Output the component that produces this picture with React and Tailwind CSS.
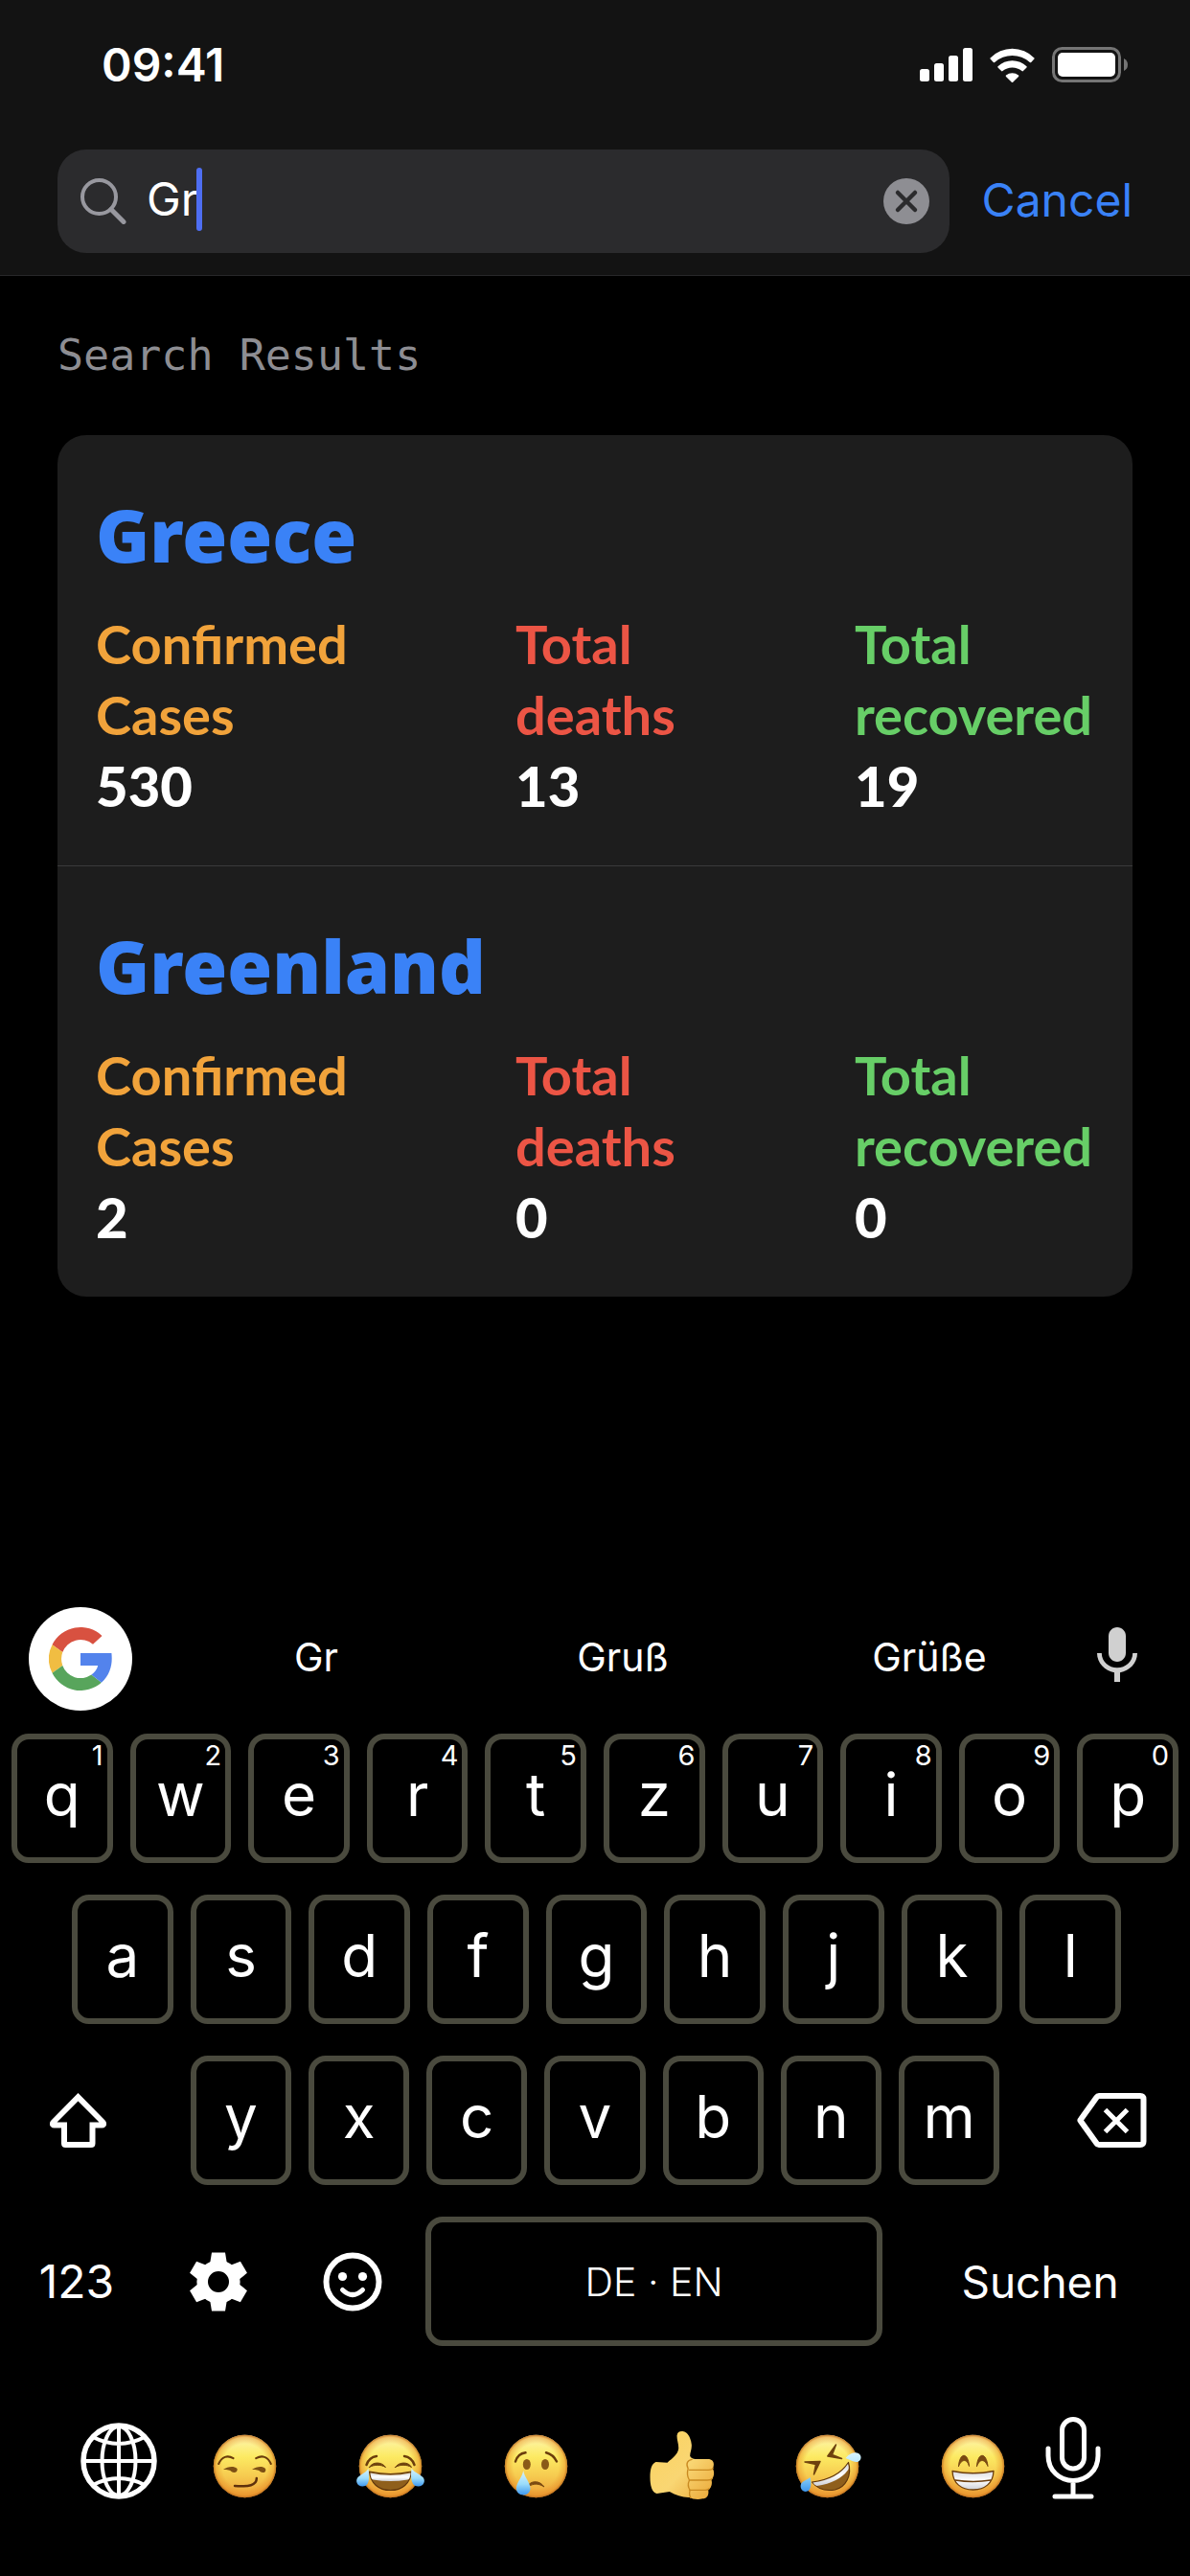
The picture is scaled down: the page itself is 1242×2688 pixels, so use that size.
import React from "react";

const results = [
  { name: "Greece", confirmed: 530, deaths: 13, recovered: 19 },
  { name: "Greenland", confirmed: 2, deaths: 0, recovered: 0 },
];

const topRow = ["q", "w", "e", "r", "t", "z", "u", "i", "o", "p"];
const homeRow = ["a", "s", "d", "f", "g", "h", "j", "k", "l"];
const bottomRow = ["y", "x", "c", "v", "b", "n", "m"];

/* ---------- status bar icons ---------- */

function SignalIcon() {
  return (
    <svg width="55" height="36" viewBox="0 0 55 36" fill="#fff" aria-hidden="true">
      <rect x="0" y="22" width="10" height="13" rx="2.5" />
      <rect x="15" y="16" width="10" height="19" rx="2.5" />
      <rect x="30" y="8" width="10" height="27" rx="2.5" />
      <rect x="45" y="0" width="10" height="35" rx="2.5" />
    </svg>
  );
}

function WifiIcon() {
  return (
    <svg width="47" height="36" viewBox="0 0 47 36" fill="#fff" aria-hidden="true">
      <path d="M0.6 10.4A32 32 0 0 1 46.4 10.4Q47 11 46.4 11.6L43.2 14.9Q42.5 15.5 41.8 14.9A27.5 27.5 0 0 0 5.2 14.9Q4.5 15.5 3.8 14.9L0.6 11.6Q0 11 0.6 10.4Z" />
      <path d="M8.5 19.3A21.5 21.5 0 0 1 38.5 19.3Q39 19.9 38.5 20.5L34.9 24.1Q34.2 24.7 33.5 24.1A15.5 15.5 0 0 0 13.5 24.1Q12.8 24.7 12.1 24.1L8.5 20.5Q8 19.9 8.5 19.3Z" />
      <path d="M17 28.6A10 10 0 0 1 30 28.6Q30.600 29.300 30 30L24.200 35.700Q23.500 36.300 22.800 35.700L17 30Q16.400 29.300 17 28.600Z" />
    </svg>
  );
}

function BatteryIcon() {
  return (
    <svg width="79" height="37" viewBox="0 0 79 37" aria-hidden="true">
      <rect x="1.500" y="1.500" width="69" height="34" rx="9" fill="none" stroke="#757575" strokeWidth="3" />
      <rect x="6" y="6" width="60" height="25" rx="5" fill="#fff" />
      <path d="M75 12Q79 14 79 18.500Q79 23 75 25Z" fill="#757575" />
    </svg>
  );
}

/* ---------- search bar icons ---------- */

function MagnifierIcon() {
  return (
    <svg width="48" height="48" viewBox="0 0 48 48" fill="none" stroke="#98989f" strokeLinecap="round" aria-hidden="true">
      <circle cx="19.500" cy="19.500" r="17.500" strokeWidth="4" />
      <path d="M32 32.500L45 45.500" strokeWidth="5" />
    </svg>
  );
}

function ClearIcon() {
  return (
    <svg width="48" height="48" viewBox="0 0 48 48" aria-hidden="true">
      <circle cx="24" cy="24" r="24" fill="#8e8e93" />
      <path d="M15 15L33 33M33 15L15 33" stroke="#2b2b2d" strokeWidth="4.500" strokeLinecap="round" />
    </svg>
  );
}

/* ---------- keyboard icons ---------- */

function GoogleIcon() {
  return (
    <svg width="66" height="66" viewBox="-33 -33 66 66" aria-hidden="true">
      <path fill="#d85140" d="M22.500-24.100A33 33 0 0 0-29.500-14.800L-18.700-6.900A20 20 0 0 1 13-15.200Z" />
      <path fill="#f1bd42" d="M-29.500-14.800A33 33 0 0 0-29.500 14.800L-18.700 6.900A20 20 0 0 1-18.700-6.900Z" />
      <path fill="#58a55c" d="M-29.500 14.800A33 33 0 0 0 21.900 24.700L11.400 16.600A20 20 0 0 1-18.700 6.900Z" />
      <path fill="#5383ec" d="M0-6H32.400C33.600 5 31.500 16 21.900 24.700L11.400 16.600C15 14 17.300 11 18.200 7H0Z" />
    </svg>
  );
}

function VoiceIcon() {
  return (
    <svg width="72" height="72" viewBox="0 0 24 24" fill="#d0d0d0" aria-hidden="true">
      <path d="M12 14c1.660 0 3-1.340 3-3V5c0-1.660-1.340-3-3-3S9 3.340 9 5v6c0 1.660 1.340 3 3 3z" />
      <path d="M17.400 11c0 3-2.540 5.100-5.400 5.100S6.600 14 6.600 11H5c0 3.410 2.720 6.230 6 6.720V21h2v-3.280c3.280-.48 6-3.300 6-6.720h-1.600z" />
    </svg>
  );
}

function ShiftIcon() {
  return (
    <svg width="59" height="57" viewBox="0 0 59 57" fill="#fff" fillRule="evenodd" aria-hidden="true">
      <path d="M29.500 0L57.500 28.500Q60.500 32 58 35Q56.800 36.500 54.500 36.500H47.500V52.500Q47.500 57 43 57H16.500Q12 57 12 52.500V36.500H4.500Q2.200 36.500 1 35Q-1.500 32 1.500 28.500ZM29.500 8.500L7.500 30.500H18V51H41.500V30.500H51.500Z" />
    </svg>
  );
}

function BackspaceIcon() {
  return (
    <svg width="73" height="57" viewBox="0 0 73 57" fill="none" stroke="#fff" aria-hidden="true">
      <path d="M23 3H66Q69.500 3 69.500 6.500V50.500Q69.500 54 66 54H23Q21.500 54 20.500 52.500L4 29.500Q3 28.500 4 27.500L20.500 4.500Q21.500 3 23 3Z" strokeWidth="6" />
      <path d="M29.500 17.500L52.500 40.500M52.500 17.500L29.500 40.500" strokeWidth="5" />
    </svg>
  );
}

function GearIcon() {
  return (
    <svg width="62" height="62" viewBox="-31 -31 62 62" aria-hidden="true">
      <circle r="16.800" fill="none" stroke="#fff" strokeWidth="11.600" />
      {[0, 60, 120, 180, 240, 300].map((angle) => (
        <path key={angle} transform={`rotate(${angle})`} fill="#fff" d="M-7-30.500H7L8.800-19.500L6-16H-6L-8.800-19.500Z" />
      ))}
    </svg>
  );
}

function SmileyIcon() {
  return (
    <svg width="62" height="62" viewBox="-31 -31 62 62" fill="none" stroke="#fff" aria-hidden="true">
      <circle r="27.500" strokeWidth="6" />
      <circle cx="-10.500" cy="-5.500" r="4.600" fill="#fff" stroke="none" />
      <circle cx="10.500" cy="-5.500" r="4.600" fill="#fff" stroke="none" />
      <path d="M-10.500 8.500Q0 18.500 10.500 8.500" strokeWidth="5" strokeLinecap="round" />
    </svg>
  );
}

function GlobeIcon() {
  return (
    <svg width="80" height="80" viewBox="-40 -40 80 80" fill="none" stroke="#fff" strokeWidth="4" aria-hidden="true">
      <circle r="37" strokeWidth="5.500" />
      <ellipse rx="17.500" ry="36" />
      <path d="M0-37V37M-37 0H37M-27-25Q0-11 27-25M-27 25Q0 11 27 25" />
    </svg>
  );
}

function DictationIcon() {
  return (
    <svg width="58" height="87" viewBox="0 0 58 87" fill="none" stroke="#fff" strokeWidth="5" strokeLinecap="round" aria-hidden="true">
      <rect x="17.500" y="3.500" width="23" height="51.500" rx="11.500" />
      <path d="M3 34V41.500C3 57 15 67.500 29 67.500S55 57 55 41.500V34M29 67.500V84M10 84H48" />
    </svg>
  );
}

/* ---------- emoji ---------- */

function EmojiDefs() {
  return (
    <svg width="0" height="0" className="absolute" aria-hidden="true">
      <defs>
        <linearGradient id="skin" x1="0" y1="0" x2="0" y2="1">
          <stop offset="0" stopColor="#fdf6b4" />
          <stop offset="0.350" stopColor="#fcea62" />
          <stop offset="0.650" stopColor="#f6cb50" />
          <stop offset="1" stopColor="#ee9f38" />
        </linearGradient>
        <radialGradient id="rim" cx="0.500" cy="0.500" r="0.500">
          <stop offset="0.720" stopColor="#e58a24" stopOpacity="0" />
          <stop offset="0.920" stopColor="#e58a24" stopOpacity="0.450" />
          <stop offset="1" stopColor="#b8681c" stopOpacity="0.900" />
        </radialGradient>
        <linearGradient id="drop" x1="0" y1="0" x2="0" y2="1">
          <stop offset="0" stopColor="#d8f3fd" />
          <stop offset="0.550" stopColor="#9bdcfb" />
          <stop offset="1" stopColor="#3e97ee" />
        </linearGradient>
        <linearGradient id="teeth" x1="0" y1="0" x2="0" y2="1">
          <stop offset="0" stopColor="#d9dade" />
          <stop offset="0.500" stopColor="#ffffff" />
          <stop offset="1" stopColor="#cfd0d6" />
        </linearGradient>
        <linearGradient id="hand" x1="0" y1="0" x2="1" y2="1">
          <stop offset="0" stopColor="#fbd25e" />
          <stop offset="0.550" stopColor="#f9d673" />
          <stop offset="1" stopColor="#eaa636" />
        </linearGradient>
      </defs>
    </svg>
  );
}

function Face({ children }) {
  return (
    <svg width="77" height="72" viewBox="-38.500 -37.500 77 72" fill="none" strokeLinecap="round" strokeLinejoin="round" aria-hidden="true">
      <circle r="32.700" fill="url(#skin)" />
      <circle r="32.700" fill="url(#rim)" />
      {children}
    </svg>
  );
}

function Smirk() {
  return (
    <Face>
      <path d="M-27.300-2.500C-24-10-18-12-12-8.300M11.700-8.300C18-12 24-10 27.300-2.500" stroke="#6b3d0c" strokeWidth="2" />
      <path d="M-22.500 3.500C-18 .5-12-1-8 2.500C-7 6-11 8-14 5.500C-15 4-18 3.500-22.500 3.500ZM7.500 3.500C12 .5 18-1 21.500 2.500C23 6 19 8 16 5.500C15 4 12 3.500 7.500 3.500Z" fill="#7d4f14" />
      <path d="M-10.500 20.500C4 21.500 12.500 20 12.300 12.500" stroke="#5e300c" strokeWidth="2.500" />
    </Face>
  );
}

function Joy() {
  return (
    <Face>
      <path d="M-25-1.500C-23-7-19-10-14.500-10.500M14.500-10.500C19-10 23-7 25-1.500" stroke="#6b3d0c" strokeWidth="2.500" />
      <path d="M-22 1C-19-5-9-5-5 1C-10-2-17-2-22 1ZM5 1C9-5 19-5 22 1C17-2 10-2 5 1Z" fill="#6e420e" stroke="#6e420e" strokeWidth="1" />
      <path d="M-22 5.500Q0 10.500 22 5.500C21 18 12 25 0 25S-21 18-22 5.500Z" fill="#8f5f1c" stroke="#5e350c" strokeWidth="1.200" />
      <path d="M-21 7Q0 11.500 21 7Q20.500 13.500 18 14Q0 17 -18 14Q-20.500 13.500-21 7Z" fill="url(#teeth)" />
      <path d="M-23 2.500C-22 10-21 21-29 21C-35 21-37 15-34 11.500C-31 8.500-26 7-23 2.500ZM22 2.500C21 10 21 21 29 21C35 21 37 15 34 11.500C31 8.500 26 7 22 2.500Z" fill="url(#drop)" />
    </Face>
  );
}

function Crying() {
  return (
    <Face>
      <path d="M-21.500-5C-20-10-16-13.500-11-14.200M10.500-14.200C15-13 19-10 21.500-5" stroke="#6b3d0c" strokeWidth="2.500" />
      <ellipse cx="-9.700" cy="-2" rx="4" ry="5.500" fill="#8a5a18" />
      <ellipse cx="9.500" cy="-2" rx="4" ry="5.500" fill="#8a5a18" />
      <path d="M-8 19.500C-4 14.500 4 15 8.500 21.500C3 18-2 17.500-8 21Z" fill="#7a4a12" stroke="#7a4a12" strokeWidth="1" />
      <path d="M-13.300 4.500C-12 12-6 17-6 23C-6 27-9 30-13.300 30S-20.600 27-20.600 23C-20.600 17-14.600 12-13.300 4.500Z" fill="url(#drop)" />
    </Face>
  );
}

function ThumbsUp() {
  return (
    <svg width="77" height="72" viewBox="40.500 45 231 216" fill="none" strokeLinecap="round" aria-hidden="true">
      <path
        fill="url(#hand)"
        d="M141 62C142 51 149 47 159 48C174 50 184 66 187 90C188 104 182 116 182 125C186 134 195 135 205 135H238C256 135 260 150 253 165C260 176 257 192 249 200C253 213 248 226 239 232C242 247 236 258 222 259C205 263 190 260 180 255C160 256 138 248 118 237L78 243C62 240 57 215 57 192C57 168 61 150 75 144L111 146C128 132 144 120 146 103C147 87 141 77 141 62Z"
      />
      <path
        d="M176 165C168 150 174 138 188 136M180 169H240Q252 169 254 163M180 201H236Q248 201 251 196M180 232H230Q238 232 241 228M176 165Q170 185 180 201Q172 218 182 232Q178 246 184 256"
        stroke="#c98a22"
        strokeWidth="4"
      />
    </svg>
  );
}

function Rofl() {
  return (
    <Face>
      <path d="M-23.500-4.500L-7.500-5L-14 8.500L-12-2ZM9-22.500L.3-10.500L15-8L5-12Z" fill="#6e420e" stroke="#6e420e" strokeWidth="1.500" />
      <path d="M-16 16.500Q11 13 22-4C26 10 19 22 8 24.500C-1 26-10 24-16 16.500Z" fill="#8f5f1c" stroke="#5e350c" strokeWidth="1.200" />
      <path d="M-15 17Q11 13.500 21.500-2.500Q23 1.500 21.500 4Q12 17-11 20.500Q-14 19-15 17Z" fill="url(#teeth)" />
      <path d="M19-8.500C24-14 29-15 32.500-13.500C36-11.500 36-6.500 32-4.800C28-3.500 24-7 19-8.500ZM-18 11.500C-16.500 17-16.500 25-21.500 26.300C-26 27-29 23-27.500 18.500C-25.500 15-21 14-18 11.500Z" fill="url(#drop)" />
    </Face>
  );
}

function Grin() {
  return (
    <Face>
      <path d="M-15 0C-14-15-5-15-4 0C-6-8-12-8-15 0ZM4 0C5-15 14-15 15.500 0C12-8 7-8 4 0Z" fill="#7a4a12" stroke="#7a4a12" strokeWidth="1" />
      <path d="M-21.500 5Q0 9.500 21.500 5C21 18 12 24.500 0 24.500S-21 18-21.500 5Z" fill="url(#teeth)" stroke="#6b3d0c" strokeWidth="1.300" />
      <path d="M-18.500 14.500Q0 17.500 18.500 14.500" stroke="#6b3d0c" strokeWidth="1.300" />
    </Face>
  );
}

const emojis = [
  { label: "Smirking face", Icon: Smirk },
  { label: "Face with tears of joy", Icon: Joy },
  { label: "Crying face", Icon: Crying },
  { label: "Thumbs up", Icon: ThumbsUp },
  { label: "Rolling on the floor laughing", Icon: Rofl },
  { label: "Beaming face", Icon: Grin },
];

/* ---------- page sections ---------- */

function Header() {
  return (
    <header className="border-b border-[#272729] bg-[#131313] pt-9 pb-[23px]">
      <div className="flex items-center justify-between pr-[65px] pl-[106px]">
        <time className="text-[48px] leading-[63px] font-semibold">09:41</time>
        <div className="flex items-center gap-[18px]">
          <SignalIcon />
          <WifiIcon />
          <BatteryIcon />
        </div>
      </div>
      <form className="mt-[57px] flex items-center px-[60px]" onSubmit={(e) => e.preventDefault()}>
        <div className="flex h-[108px] flex-1 items-center rounded-[30px] bg-[#2b2b2d] pr-[21px] pl-6">
          <MagnifierIcon />
          <div className="ml-[21px] flex items-center pb-1">
            <input
              type="text"
              aria-label="Search"
              defaultValue="Gr"
              className="field-sizing-content bg-transparent text-[48px] leading-[60px] text-white caret-transparent outline-none"
            />
            <span className="-ml-0.5 h-[66px] w-[6px] rounded-full bg-[#4e6ef2]" />
          </div>
          <button type="button" aria-label="Clear search" className="ml-auto">
            <ClearIcon />
          </button>
        </div>
        <button type="button" className="ml-[34px] pb-0.5 text-[48px] leading-[60px] text-[#3a82f7]">
          Cancel
        </button>
      </form>
    </header>
  );
}

function Stat({ first, second, value, tone }) {
  return (
    <div>
      <dt className={`text-[56px] font-bold ${tone}`}>
        {first}
        <br />
        {second}
      </dt>
      <dd className="text-[58px] font-black text-white">{value}</dd>
    </div>
  );
}

function ResultCard({ name, confirmed, deaths, recovered }) {
  return (
    <li className="px-10 pt-[52px] pb-[46px]">
      <h2 className="font-['Noto_Sans',sans-serif] text-[76px] leading-[104px] font-black text-[#3a82f7]">{name}</h2>
      <dl className="mt-[25px] grid grid-cols-[438fr_354fr_250fr] font-['Lato',sans-serif] *:leading-[74px]">
        <Stat first="Confirmed" second="Cases" value={confirmed} tone="text-[#f1a33b]" />
        <Stat first="Total" second="deaths" value={deaths} tone="text-[#ec5545]" />
        <Stat first="Total" second="recovered" value={recovered} tone="text-[#67ce67]" />
      </dl>
    </li>
  );
}

function Key({ letter, hint }) {
  return (
    <button
      type="button"
      className="relative h-[135px] min-w-0 flex-1 rounded-[18px] border-[6px] border-[#4a4a3e] pb-2 text-[62px] leading-[80px]"
    >
      {letter}
      {hint && <span className="absolute top-0.5 right-1 text-[29px] leading-[30px]">{hint}</span>}
    </button>
  );
}

function Keyboard() {
  return (
    <section aria-label="Keyboard" className="mt-auto pb-20">
      <div className="flex items-center pr-10 pl-[30px]">
        <button type="button" aria-label="Google search" className="flex size-[108px] items-center justify-center rounded-full bg-white">
          <GoogleIcon />
        </button>
        <div className="ml-8 grid flex-1 grid-cols-3 pb-1 text-[41px] leading-[54px]">
          <button type="button">Gr</button>
          <button type="button">Gruß</button>
          <button type="button">Grüße</button>
        </div>
        <button type="button" aria-label="Voice typing" className="pb-1.5">
          <VoiceIcon />
        </button>
      </div>

      <div className="mt-6 flex flex-col gap-[33px]">
        <div className="flex gap-[18px] px-3">
          {topRow.map((letter, i) => (
            <Key key={letter} letter={letter} hint={String((i + 1) % 10)} />
          ))}
        </div>
        <div className="flex gap-[18px] pr-[72px] pl-[75px]">
          {homeRow.map((letter) => (
            <Key key={letter} letter={letter} />
          ))}
        </div>
        <div className="flex items-center">
          <button type="button" aria-label="Shift" className="flex flex-1 justify-center pr-9">
            <ShiftIcon />
          </button>
          <div className="flex w-[68%] gap-[18px]">
            {bottomRow.map((letter) => (
              <Key key={letter} letter={letter} />
            ))}
          </div>
          <button type="button" aria-label="Delete" className="flex flex-1 justify-center pl-9">
            <BackspaceIcon />
          </button>
        </div>
        <div className="grid grid-cols-[160fr_136fr_148fr_477fr_321fr] items-center text-[46px] leading-[60px]">
          <button type="button" className="text-[48px]">
            123
          </button>
          <button type="button" aria-label="Settings" className="flex justify-center">
            <GearIcon />
          </button>
          <button type="button" aria-label="Emoji" className="flex justify-center pr-1">
            <SmileyIcon />
          </button>
          <button type="button" className="h-[135px] rounded-[18px] border-[6px] border-[#4a4a3e] text-[41px] font-light">
            DE · EN
          </button>
          <button type="button" className="pl-2">
            Suchen
          </button>
        </div>
      </div>

      <EmojiDefs />
      <div className="mt-[73px] flex items-end pr-[93px] pl-[84px]">
        <button type="button" aria-label="Switch keyboard">
          <GlobeIcon />
        </button>
        <div className="ml-4 flex flex-1">
          {emojis.map(({ label, Icon }) => (
            <button key={label} type="button" aria-label={label} className="flex flex-1 justify-center">
              <Icon />
            </button>
          ))}
        </div>
        <button type="button" aria-label="Dictate">
          <DictationIcon />
        </button>
      </div>
    </section>
  );
}

export default function App() {
  return (
    <div className="flex min-h-screen flex-col bg-black font-['Inter',sans-serif] text-white">
      <Header />
      <main className="px-[60px] pt-14 pb-10">
        <h1 className="font-['DejaVu_Sans_Mono',monospace] text-[45px] leading-[54px] text-[#8d8d92]">Search Results</h1>
        <ul className="mt-14 divide-y divide-[#3a3a3b] rounded-[30px] bg-[#1d1d1d]">
          {results.map((result) => (
            <ResultCard key={result.name} {...result} />
          ))}
        </ul>
      </main>
      <Keyboard />
    </div>
  );
}
